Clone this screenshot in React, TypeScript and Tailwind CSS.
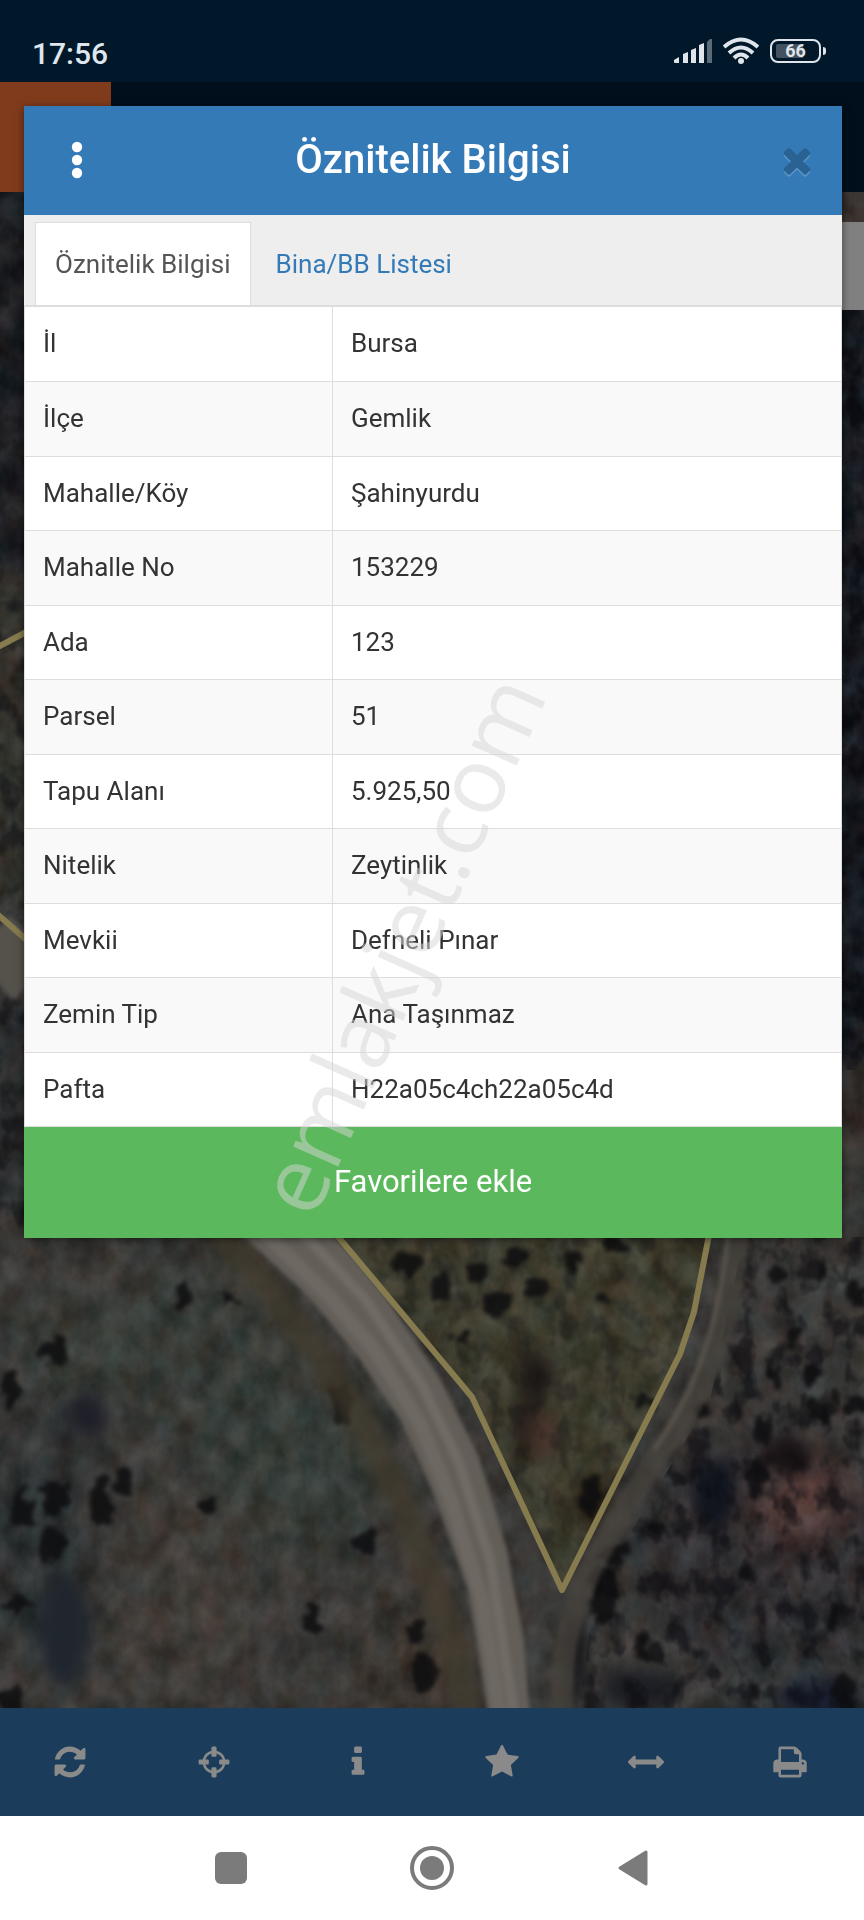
import { useState } from 'react';

const parcelInfo = [
  { label: 'İl', value: 'Bursa' },
  { label: 'İlçe', value: 'Gemlik' },
  { label: 'Mahalle/Köy', value: 'Şahinyurdu' },
  { label: 'Mahalle No', value: '153229' },
  { label: 'Ada', value: '123' },
  { label: 'Parsel', value: '51' },
  { label: 'Tapu Alanı', value: '5.925,50' },
  { label: 'Nitelik', value: 'Zeytinlik' },
  { label: 'Mevkii', value: 'Defneli Pınar' },
  { label: 'Zemin Tip', value: 'Ana Taşınmaz' },
  { label: 'Pafta', value: 'H22a05c4ch22a05c4d' },
];

const toolbarItems = [
  {
    name: 'Yenile',
    path: 'M1639 1056q0 5-1 7-64 268-268 434.5t-478 166.5q-146 0-282.5-55t-243.5-157l-129 129q-19 19-45 19t-45-19-19-45v-448q0-26 19-45t45-19h448q26 0 45 19t19 45-19 45l-137 137q71 66 161 102t187 36q134 0 250-65t186-179q11-17 53-117 8-23 30-23h192q13 0 22.5 9.5t9.5 22.5zm25-800v448q0 26-19 45t-45 19h-448q-26 0-45-19t-19-45 19-45l138-138q-148-137-349-137-134 0-250 65t-186 179q-11 17-53 117-8 23-30 23h-199q-13 0-22.5-9.5t-9.5-22.5v-7q65-268 270-434.5t480-166.5q146 0 284 55.5t245 156.5l130-129q19-19 45-19t45 19 19 45z',
  },
  {
    name: 'Konum',
    path: 'M1325 1024h-109q-26 0-45-19t-19-45v-128q0-26 19-45t45-19h109q-32-108-112.5-188.5t-188.5-112.5v109q0 26-19 45t-45 19h-128q-26 0-45-19t-19-45v-109q-108 32-188.5 112.5t-112.5 188.5h109q26 0 45 19t19 45v128q0 26-19 45t-45 19h-109q32 108 112.5 188.5t188.5 112.5v-109q0-26 19-45t45-19h128q26 0 45 19t19 45v109q108-32 188.5-112.5t112.5-188.5zm339-192v128q0 26-19 45t-45 19h-143q-37 161-154.5 278.5t-278.5 154.5v143q0 26-19 45t-45 19h-128q-26 0-45-19t-19-45v-143q-161-37-278.5-154.5t-154.5-278.5h-143q-26 0-45-19t-19-45v-128q0-26 19-45t45-19h143q37-161 154.5-278.5t278.5-154.5v-143q0-26 19-45t45-19h128q26 0 45 19t19 45v143q161 37 278.5 154.5t154.5 278.5h143q26 0 45 19t19 45z',
  },
  {
    name: 'Bilgi',
    path: 'M1216 1344v128q0 26-19 45t-45 19h-512q-26 0-45-19t-19-45v-128q0-26 19-45t45-19h64v-384h-64q-26 0-45-19t-19-45v-128q0-26 19-45t45-19h384q26 0 45 19t19 45v576h64q26 0 45 19t19 45zm-128-1152v192q0 26-19 45t-45 19h-256q-26 0-45-19t-19-45v-192q0-26 19-45t45-19h256q26 0 45 19t19 45z',
  },
  {
    name: 'Favoriler',
    path: 'M1728 647q0 22-26 48l-363 354 86 500q1 7 1 20 0 21-10.5 35.5t-30.5 14.5q-19 0-40-12l-449-236-449 236q-22 12-40 12-21 0-31.5-14.5t-10.5-35.5q0-6 2-20l86-500-364-354q-25-27-25-48 0-37 56-46l502-73 225-455q19-41 49-41t49 41l225 455 502 73q56 9 56 46z',
  },
  {
    name: 'Ölçüm',
    path: 'M1792 896q0 26-19 45l-256 256q-19 19-45 19t-45-19-19-45v-128h-1024v128q0 26-19 45t-45 19-45-19l-256-256q-19-19-19-45t19-45l256-256q19-19 45-19t45 19 19 45v128h1024v-128q0-26 19-45t45-19 45 19l256 256q19 19 19 45z',
  },
  {
    name: 'Yazdır',
    path: 'M448 1536h896v-256h-896v256zm0-640h896v-384h-160q-40 0-68-28t-28-68v-160h-640v640zm1152 64q0-26-19-45t-45-19-45 19-19 45 19 45 45 19 45-19 19-45zm128 0v416q0 13-9.5 22.5t-22.5 9.5h-224v160q0 40-28 68t-68 28h-960q-40 0-68-28t-28-68v-160h-224q-13 0-22.5-9.5t-9.5-22.5v-416q0-79 56.5-135.5t135.5-56.5h64v-544q0-40 28-68t68-28h672q40 0 88 20t76 48l152 152q28 28 48 76t20 88v256h64q79 0 135.5 56.5t56.5 135.5z',
  },
];

// tree crowns: x, y, rx, ry
const trees = [
  [56, 1354, 11, 14], [10, 1390, 9, 16], [22, 1510, 12, 18], [56, 1497, 14, 19],
  [50, 1544, 13, 19], [100, 1500, 11, 26], [124, 1482, 8, 14], [208, 1504, 9, 7],
  [365, 1543, 11, 13], [342, 1402, 11, 20], [228, 1298, 7, 6], [182, 1296, 5, 14],
  [20, 1604, 12, 12], [12, 1700, 14, 15], [415, 1632, 8, 10], [425, 1672, 16, 19],
  [312, 1622, 9, 15], [410, 1262, 15, 11], [440, 1290, 12, 15], [476, 1270, 11, 13],
  [496, 1304, 13, 15], [516, 1258, 15, 10], [536, 1286, 11, 9], [574, 1264, 7, 14],
  [602, 1296, 10, 8], [616, 1246, 12, 8], [462, 1336, 12, 8], [642, 1404, 9, 12],
  [590, 1494, 10, 19], [702, 1410, 9, 10], [776, 1274, 7, 8], [822, 1272, 5, 8],
  [794, 1334, 8, 15], [812, 1374, 10, 9], [774, 1374, 7, 13], [856, 1290, 11, 15],
  [762, 1430, 10, 15], [616, 1552, 13, 15], [604, 1592, 13, 28], [640, 1646, 8, 9],
  [748, 1574, 8, 8], [832, 1620, 8, 13], [856, 1406, 11, 11], [820, 1410, 8, 13],
  [844, 1690, 11, 19], [758, 1690, 9, 8], [756, 1480, 9, 20], [656, 1524, 8, 6],
];

// larger, lighter shadows: x, y, rx, ry, colour
const shadows: [number, number, number, number, string][] = [
  [88, 1416, 20, 22, '#1f1f28'],
  [64, 1630, 24, 56, '#20262e'],
  [715, 1492, 22, 34, '#11151e'],
  [534, 1374, 18, 26, '#211c18'],
  [528, 1424, 18, 32, '#28211b'],
  [545, 1436, 14, 24, '#4a362e'],
  [592, 1500, 18, 26, '#2c2216'],
  [790, 1458, 24, 18, '#171114'],
  [576, 1660, 10, 46, '#15161a'],
  [640, 1690, 40, 20, '#1d1e24'],
  [820, 1700, 40, 20, '#1a2030'],
];

function SatelliteMap() {
  return (
    <svg
      className="absolute inset-0 h-full w-full"
      viewBox="0 192 864 1516"
      preserveAspectRatio="xMidYMid slice"
      colorInterpolationFilters="sRGB"
      aria-hidden="true"
    >
      <defs>
        <filter id="soft" x="-50%" y="-50%" width="200%" height="200%">
          <feGaussianBlur stdDeviation="24" />
        </filter>
        <filter id="edge" x="-20%" y="-20%" width="140%" height="140%">
          <feTurbulence type="fractalNoise" baseFrequency="0.06" numOctaves="3" seed="4" />
          <feDisplacementMap in="SourceGraphic" scale="24" xChannelSelector="R" yChannelSelector="G" />
          <feGaussianBlur stdDeviation="2" />
        </filter>
        <filter id="shade" x="-20%" y="-20%" width="140%" height="140%">
          <feGaussianBlur stdDeviation="8" />
        </filter>
        <filter id="roadEdge">
          <feGaussianBlur stdDeviation="2" />
        </filter>
        <filter id="vergeBlur" x="-20%" y="-20%" width="140%" height="140%">
          <feGaussianBlur stdDeviation="7" />
        </filter>
        <filter id="grain" x="0" y="0" width="100%" height="100%">
          <feTurbulence type="fractalNoise" baseFrequency="0.04 0.03" numOctaves="4" seed="11" />
          <feColorMatrix values="0.6 0.2 0 0 -0.2  0.6 0 0.1 0 -0.15  0.6 0 0.2 0 -0.21  0 0 0 0 0.3" />
        </filter>
        <filter id="scrub" x="0" y="0" width="100%" height="100%">
          <feTurbulence type="fractalNoise" baseFrequency="0.045 0.035" numOctaves="3" seed="23" />
          <feColorMatrix values="0 0 0 0 0.04  0 0 0 0 0.04  0 0 0 0 0.06  4 0 0 0 -1.9" />
        </filter>
        <clipPath id="eastClip">
          <path d="M744 1237H864V1708H578L596 1590L650 1500L710 1400Z" />
        </clipPath>
        <clipPath id="parcelClip">
          <path d="M338 1237L472 1397L562 1590L680 1354L694 1312L709 1237Z" />
        </clipPath>
      </defs>

      <rect y="192" width="864" height="1516" fill="#3d3b39" />
      <g filter="url(#soft)">
        <ellipse cx="160" cy="1340" rx="150" ry="80" fill="#3a3f3a" />
        <ellipse cx="290" cy="1470" rx="100" ry="90" fill="#37403b" />
        <ellipse cx="180" cy="1590" rx="90" ry="110" fill="#443e39" />
        <ellipse cx="40" cy="1540" rx="60" ry="130" fill="#2c3234" />
        <ellipse cx="80" cy="1260" rx="70" ry="30" fill="#3e3a38" />
        <ellipse cx="770" cy="1560" rx="130" ry="130" fill="#302d31" />
        <ellipse cx="800" cy="1500" rx="44" ry="40" fill="#70443d" />
        <ellipse cx="780" cy="1680" rx="70" ry="50" fill="#313538" />
        <ellipse cx="410" cy="1670" rx="50" ry="60" fill="#3f352d" />
      </g>
      <path
        d="M338 1237L472 1397L562 1590L680 1354L694 1312L709 1237Z"
        fill="#454330"
      />

      {/* narrow strips left and right of the dialog */}
      <g filter="url(#shade)">
        <rect x="-20" y="170" width="60" height="400" fill="#15181e" />
        <rect x="-20" y="570" width="60" height="340" fill="#37352e" />
        <rect x="-20" y="1010" width="60" height="200" fill="#2b2e2f" />
        <rect x="830" y="300" width="60" height="760" fill="#0d121c" />
        <rect x="830" y="1070" width="60" height="70" fill="#332b28" />
      </g>
      <rect x="800" y="192" width="64" height="32" fill="#3d3533" />

      <rect y="192" width="864" height="1516" filter="url(#grain)" />
      <g filter="url(#shade)">
        {shadows.map(([x, y, rx, ry, fill]) => (
          <ellipse key={`${x}-${y}`} cx={x} cy={y} rx={rx} ry={ry} fill={fill} />
        ))}
      </g>
      <g clipPath="url(#eastClip)">
        <rect y="1237" width="864" height="471" filter="url(#scrub)" opacity="0.6" />
      </g>
      <g clipPath="url(#parcelClip)">
        <rect y="1237" width="864" height="471" filter="url(#scrub)" opacity="0.3" />
      </g>
      <rect y="192" width="24" height="1045" filter="url(#scrub)" opacity="0.5" />
      <rect x="842" y="310" width="22" height="760" filter="url(#scrub)" opacity="0.8" />

      <g filter="url(#edge)" fill="#0d0d0f" opacity="0.85">
        {trees.map(([x, y, rx, ry]) => (
          <ellipse key={`${x}-${y}`} cx={x} cy={y} rx={rx} ry={ry} />
        ))}
      </g>

      {/* verge and main road */}
      <path
        d="M212 1225C290 1310 350 1390 385 1470C430 1560 450 1630 470 1720"
        fill="none"
        stroke="#423a2c"
        strokeWidth="30"
        opacity="0.7"
        filter="url(#vergeBlur)"
      />
      <g filter="url(#roadEdge)" fill="none">
        <path
          d="M237 1230L309 1297L358 1357L402 1423L435 1497L468 1590L488 1715H530L524 1640L507 1550L479 1457L441 1380L386 1297L330 1230Z"
          fill="#635e58"
        />
        <path
          d="M262 1230L330 1297L376 1352L420 1423L450 1497L482 1600L500 1715"
          stroke="#6d6862"
          strokeWidth="14"
        />
        <path
          d="M300 1230L366 1300L422 1385L458 1460L490 1560L514 1715"
          stroke="#706b65"
          strokeWidth="10"
        />
        <path d="M-10 935L34 980" stroke="#55524c" strokeWidth="56" />
        {/* dirt track on the east side */}
        <path
          d="M738 1230C732 1330 700 1400 660 1450C620 1520 590 1560 574 1610C562 1650 562 1680 562 1720"
          stroke="#47433d"
          strokeWidth="22"
          opacity="0.7"
        />
        <path
          d="M728 1230C720 1330 690 1400 654 1450"
          stroke="#5b554d"
          strokeWidth="4"
        />
      </g>

      {/* parcel boundary */}
      <g fill="none" stroke="#857b4f" strokeWidth="6" strokeLinejoin="round">
        <path d="M335 1233L472 1397L562 1590L680 1354L694 1312L710 1230" />
        <path d="M-4 648L30 630" />
        <path d="M-4 913L30 943" />
      </g>
    </svg>
  );
}

function StatusBar() {
  return (
    <div className="flex h-[82px] items-center justify-between bg-[#01182b] pt-6 pr-[38px] pl-8">
      <span className="text-[30px] font-medium text-[#dfe7ee]">17:56</span>
      <div className="flex items-center gap-[11px] pb-1">
        <svg width="38" height="26" viewBox="0 0 38 26" fill="#dfe5ea" aria-hidden="true">
          <path d="M0 22L5 19V25H1Q0 25 0 24Z" />
          <path d="M9 16L14 14V25H9Z" />
          <path d="M17 12L22 10V25H17Z" />
          <path d="M25 7L30 5V25H25Z" />
          <path d="M33 4L36 1H38V25H33Z" fill="#5c6b78" />
        </svg>
        <svg
          width="36"
          height="28"
          viewBox="0 0 36 28"
          fill="none"
          stroke="#dfe5ea"
          strokeWidth="4"
          aria-hidden="true"
        >
          <path d="M1 10Q18 -5 35 10" />
          <path d="M6 16Q18 5 30 16" />
          <path d="M11 21Q18 14 25 21" />
          <circle cx="18" cy="24" r="3" fill="#dfe5ea" stroke="none" />
        </svg>
        <div className="flex items-center gap-0.5">
          <div className="relative flex h-6 w-[51px] items-center justify-center rounded-lg border-2 border-[#dfe5ea]">
            <span className="absolute inset-y-[3px] left-1 w-[27px] rounded-l-xs bg-[#44525f]" />
            <span className="relative text-lg leading-none font-bold text-[#dfe5ea]">66</span>
          </div>
          <span className="h-2 w-[3px] rounded-r-sm bg-[#dfe5ea]" />
        </div>
      </div>
    </div>
  );
}

function App() {
  const [activeTab, setActiveTab] = useState('oznitelik');

  return (
    <div className="relative flex min-h-screen flex-col bg-white font-[Roboto,sans-serif]">
      <StatusBar />
      <div className="flex h-[110px] bg-[#010f1c]">
        <div className="w-[111px] bg-[#803b1c]" />
      </div>

      <main className="relative flex-1 overflow-hidden bg-[#333432]">
        <SatelliteMap />
        <div className="absolute top-[30px] right-0 h-[88px] w-9 bg-[#808080]" />
      </main>

      <nav className="grid h-[108px] grid-cols-6 bg-[#1b3d5b]">
        {toolbarItems.map((item) => (
          <button
            key={item.name}
            type="button"
            aria-label={item.name}
            className="flex items-center justify-center pr-1 text-[#8a8a8a]"
          >
            <svg width="36" height="36" viewBox="0 0 1792 1792" fill="currentColor">
              <path d={item.path} />
            </svg>
          </button>
        ))}
      </nav>

      <div className="flex h-[104px] items-center justify-center gap-[156px] bg-white">
        <button type="button" aria-label="Son uygulamalar" className="flex w-11 justify-center">
          <span className="h-8 w-8 rounded-md bg-[#7b7b7b]" />
        </button>
        <button type="button" aria-label="Ana ekran">
          <svg width="46" height="46" viewBox="0 0 46 46">
            <circle cx="23" cy="23" r="20" fill="none" stroke="#7b7b7b" strokeWidth="4" />
            <circle cx="23" cy="23" r="12" fill="#7b7b7b" />
          </svg>
        </button>
        <button type="button" aria-label="Geri" className="flex w-11 justify-center">
          <svg width="32" height="38" viewBox="0 0 32 38">
            <path
              d="M3 19L29 3V35Z"
              fill="#7b7b7b"
              stroke="#7b7b7b"
              strokeWidth="3"
              strokeLinejoin="round"
            />
          </svg>
        </button>
      </div>

      {/* attribute dialog */}
      <div
        role="dialog"
        aria-labelledby="dialog-title"
        className="absolute top-[106px] right-[22px] left-6 bg-white shadow-[0_2px_8px_rgba(0,0,0,0.5)]"
      >
        <div className="grid h-[109px] grid-cols-[1fr_auto_1fr] items-center bg-[#337ab7] px-[25px] pb-0.5">
          <button type="button" aria-label="Menü" className="flex w-14 justify-center">
            <svg width="12" height="38" viewBox="0 0 12 38" fill="#fff">
              <circle cx="6" cy="6" r="5.2" />
              <circle cx="6" cy="19" r="5.2" />
              <circle cx="6" cy="32" r="5.2" />
            </svg>
          </button>
          <h1 id="dialog-title" className="text-[40px] font-medium text-white">
            Öznitelik Bilgisi
          </h1>
          <button type="button" aria-label="Kapat" className="justify-self-end">
            <svg
              width="40"
              height="40"
              viewBox="0 0 1792 1792"
              className="fill-[#296293] drop-shadow-[0_2px_0_#5c95c5]"
            >
              <path d="M1490 1322q0 40-28 68l-136 136q-28 28-68 28t-68-28l-294-294-294 294q-28 28-68 28t-68-28l-136-136q-28-28-28-68t28-68l294-294-294-294q-28-28-28-68t28-68l136-136q28-28 68-28t68 28l294 294 294-294q28-28 68-28t68 28l136 136q28 28 28 68t-28 68l-294 294 294 294q28 28 28 68z" />
            </svg>
          </button>
        </div>

        <div
          role="tablist"
          className="flex h-[92px] border-b-2 border-[#ddd] bg-[#eee] pt-[7px] pl-[11px] text-[26px]"
        >
          <button
            type="button"
            role="tab"
            aria-selected={activeTab === 'oznitelik'}
            onClick={() => setActiveTab('oznitelik')}
            className="border border-b-0 border-[#ddd] bg-white px-[19px] text-[#555]"
          >
            Öznitelik Bilgisi
          </button>
          <button
            type="button"
            role="tab"
            aria-selected={activeTab === 'bina'}
            onClick={() => setActiveTab('bina')}
            className="border border-b-0 border-transparent px-6 text-[#337ab7]"
          >
            Bina/BB Listesi
          </button>
        </div>

        <table className="w-full border-collapse text-[26px] text-[#333]">
          <tbody>
            {parcelInfo.map((row) => (
              <tr key={row.label} className="h-[75px] odd:h-[74px] even:bg-[#f9f9f9]">
                <th
                  scope="row"
                  className="w-[308px] border border-t-0 border-[#ddd] px-[18px] text-left font-normal"
                >
                  {row.label}
                </th>
                <td className="border border-t-0 border-[#ddd] px-[18px]">{row.value}</td>
              </tr>
            ))}
          </tbody>
        </table>

        <button
          type="button"
          className="block h-[111px] w-full bg-[#5cb85c] text-[31px] text-white"
        >
          Favorilere ekle
        </button>

        <svg
          className="pointer-events-none absolute inset-0 h-full w-full overflow-visible"
          aria-hidden="true"
        >
          <text
            x="290"
            y="1115"
            transform="rotate(-66 290 1115)"
            className="fill-[#d6d6d6] font-['Open_Sans',sans-serif] text-[92px] opacity-50"
          >
            emlakjet.com
          </text>
        </svg>
      </div>
    </div>
  );
}

export default App;
